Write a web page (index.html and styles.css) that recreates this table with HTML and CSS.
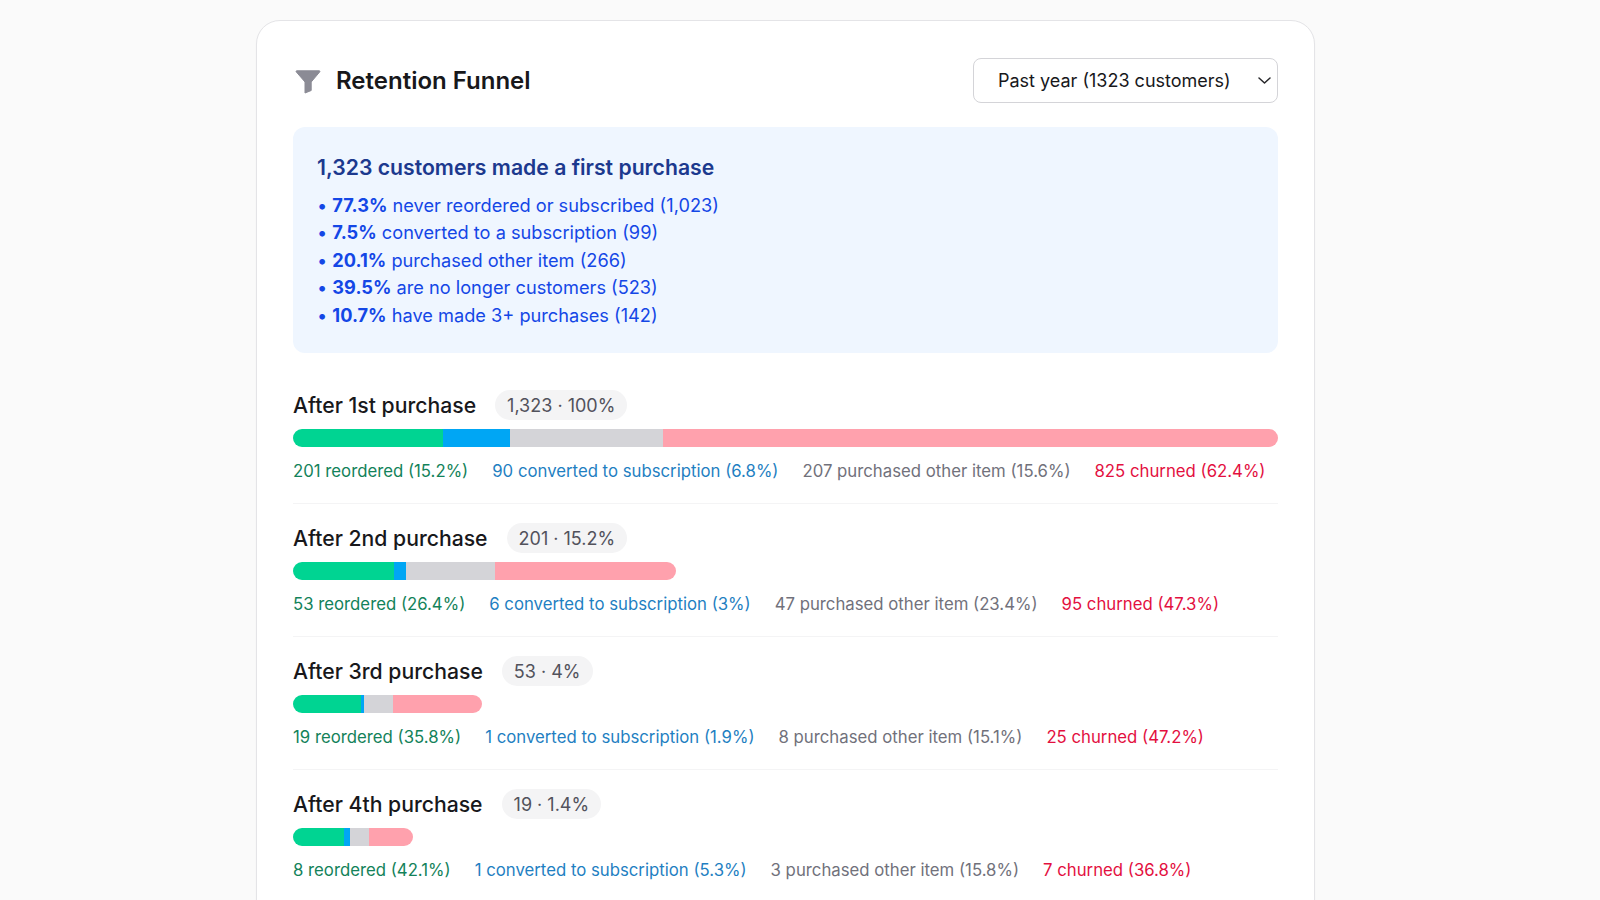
FILE: index.html
```html
<!DOCTYPE html>
<html lang="en">
<head>
<meta charset="utf-8">
<title>Retention Funnel</title>
<link rel="stylesheet" href="styles.css">
</head>
<body>
<main class="card">
  <header class="card-header">
    <div class="title-group">
      <svg class="funnel-icon" width="26" height="24" viewBox="0 0 26 24" aria-hidden="true">
        <path d="M1.2 1.8 Q0.6 0.8 2 0.8 H24 Q25.4 0.8 24.8 1.8 L16.2 12 V20.5 L10 23 V12 Z" fill="#8b8b95" stroke="#8b8b95" stroke-width="1" stroke-linejoin="round"/>
      </svg>
      <h1 class="title">Retention Funnel</h1>
    </div>
    <div class="select">
      <span class="select-label">Past year (1323 customers)</span>
      <svg class="chevron" width="13" height="7" viewBox="0 0 13 7" aria-hidden="true">
        <path d="M1 1 L6.5 6 L12 1" fill="none" stroke="#27272a" stroke-width="1.5" stroke-linecap="round" stroke-linejoin="round"/>
      </svg>
    </div>
  </header>

  <section class="summary">
    <h2 class="summary-title">1,323 customers made a first purchase</h2>
    <ul class="summary-list">
      <li>• <b>77.3%</b> never reordered or subscribed (1,023)</li>
      <li>• <b>7.5%</b> converted to a subscription (99)</li>
      <li>• <b>20.1%</b> purchased other item (266)</li>
      <li>• <b>39.5%</b> are no longer customers (523)</li>
      <li>• <b>10.7%</b> have made 3+ purchases (142)</li>
    </ul>
  </section>

  <section class="stages">
    <div class="stage">
      <div class="stage-head">
        <h3 class="stage-title">After 1st purchase</h3>
        <span class="pill">1,323 · 100%</span>
      </div>
      <div class="bar" style="width:100%">
        <span class="seg seg-green" style="width:15.2%"></span>
        <span class="seg seg-blue" style="width:6.8%"></span>
        <span class="seg seg-gray" style="width:15.6%"></span>
        <span class="seg seg-red" style="width:62.4%"></span>
      </div>
      <div class="legend">
        <span class="lg-green">201 reordered (15.2%)</span>
        <span class="lg-blue">90 converted to subscription (6.8%)</span>
        <span class="lg-gray">207 purchased other item (15.6%)</span>
        <span class="lg-red">825 churned (62.4%)</span>
      </div>
    </div>

    <div class="stage">
      <div class="stage-head">
        <h3 class="stage-title">After 2nd purchase</h3>
        <span class="pill">201 · 15.2%</span>
      </div>
      <div class="bar" style="width:38.9%">
        <span class="seg seg-green" style="width:26.4%"></span>
        <span class="seg seg-blue" style="width:3%"></span>
        <span class="seg seg-gray" style="width:23.4%"></span>
        <span class="seg seg-red" style="width:47.2%"></span>
      </div>
      <div class="legend">
        <span class="lg-green">53 reordered (26.4%)</span>
        <span class="lg-blue">6 converted to subscription (3%)</span>
        <span class="lg-gray">47 purchased other item (23.4%)</span>
        <span class="lg-red">95 churned (47.3%)</span>
      </div>
    </div>

    <div class="stage">
      <div class="stage-head">
        <h3 class="stage-title">After 3rd purchase</h3>
        <span class="pill">53 · 4%</span>
      </div>
      <div class="bar" style="width:19.15%">
        <span class="seg seg-green" style="width:35.8%"></span>
        <span class="seg seg-blue" style="width:1.9%"></span>
        <span class="seg seg-gray" style="width:15.1%"></span>
        <span class="seg seg-red" style="width:47.2%"></span>
      </div>
      <div class="legend">
        <span class="lg-green">19 reordered (35.8%)</span>
        <span class="lg-blue">1 converted to subscription (1.9%)</span>
        <span class="lg-gray">8 purchased other item (15.1%)</span>
        <span class="lg-red">25 churned (47.2%)</span>
      </div>
    </div>

    <div class="stage">
      <div class="stage-head">
        <h3 class="stage-title">After 4th purchase</h3>
        <span class="pill">19 · 1.4%</span>
      </div>
      <div class="bar" style="width:12.2%">
        <span class="seg seg-green" style="width:42.1%"></span>
        <span class="seg seg-blue" style="width:5.3%"></span>
        <span class="seg seg-gray" style="width:15.8%"></span>
        <span class="seg seg-red" style="width:36.8%"></span>
      </div>
      <div class="legend">
        <span class="lg-green">8 reordered (42.1%)</span>
        <span class="lg-blue">1 converted to subscription (5.3%)</span>
        <span class="lg-gray">3 purchased other item (15.8%)</span>
        <span class="lg-red">7 churned (36.8%)</span>
      </div>
    </div>
  </section>
</main>
</body>
</html>
```

FILE: styles.css
```css
* {
  box-sizing: border-box;
}

html, body {
  margin: 0;
  padding: 0;
}

body {
  background: #fafafa;
  font-family: Inter, "Noto Sans", "Liberation Sans", sans-serif;
  color: #18181b;
  padding-top: 20px;
}

.card {
  width: 1059px;
  margin-left: 256px;
  background: #ffffff;
  border: 1px solid #e4e4e7;
  border-radius: 24px;
  padding: 37px 36px 40px;
  box-shadow: 0 1px 2px rgba(0, 0, 0, 0.03);
}

.card-header {
  display: flex;
  align-items: center;
  justify-content: space-between;
  height: 45px;
}

.title-group {
  display: flex;
  align-items: center;
  gap: 15px;
  padding-left: 2px;
}

.funnel-icon {
  display: block;
  margin-top: 2px;
}

.title {
  margin: 0;
  font-size: 24px;
  font-weight: 600;
  color: #18181b;
}

.select {
  width: 305px;
  height: 45px;
  border: 1px solid #d4d4d8;
  border-radius: 8px;
  display: flex;
  align-items: center;
  justify-content: space-between;
  padding: 0 6px 0 24px;
  background: #fff;
}

.select-label {
  font-size: 18px;
  color: #18181b;
}

.chevron {
  display: block;
}

.summary {
  margin-top: 24px;
  background: #eff6ff;
  border-radius: 12px;
  padding: 26px 24px 24px;
}

.summary-title {
  margin: 0;
  font-size: 21.2px;
  line-height: 28px;
  font-weight: 600;
  color: #1c398e;
}

.summary-list {
  list-style: none;
  margin: 11px 0 0;
  padding: 0;
  font-size: 18.2px;
  line-height: 27.4px;
  color: #1447e6;
}

.summary-list b {
  font-weight: 700;
}

.stages {
  margin-top: 18px;
}

.stage {
  padding: 19px 0 20px;
  border-bottom: 1px solid #f4f4f5;
}

.stage-head {
  display: flex;
  align-items: center;
  gap: 19px;
  height: 30px;
}

.stage-title {
  margin: 0;
  font-size: 21.2px;
  font-weight: 500;
  color: #18181b;
}

.pill {
  background: #f4f4f5;
  border-radius: 999px;
  padding: 0 12px;
  height: 30px;
  display: inline-flex;
  align-items: center;
  font-size: 18px;
  color: #52525c;
}

.bar {
  display: flex;
  height: 18px;
  margin-top: 9px;
  border-radius: 999px;
  overflow: hidden;
}

.seg {
  display: block;
  height: 100%;
}

.seg-green { background: #00d492; }
.seg-blue { background: #00a6f4; }
.seg-gray { background: #d4d4d8; }
.seg-red { background: #ffa1ad; }

.legend {
  display: flex;
  gap: 24px;
  margin-top: 12px;
  font-size: 16.75px;
  line-height: 24px;
}

.lg-green { color: #13825a; }
.lg-blue { color: #1f7fc2; }
.lg-gray { color: #71717b; }
.lg-red { color: #e3103f; }
```
